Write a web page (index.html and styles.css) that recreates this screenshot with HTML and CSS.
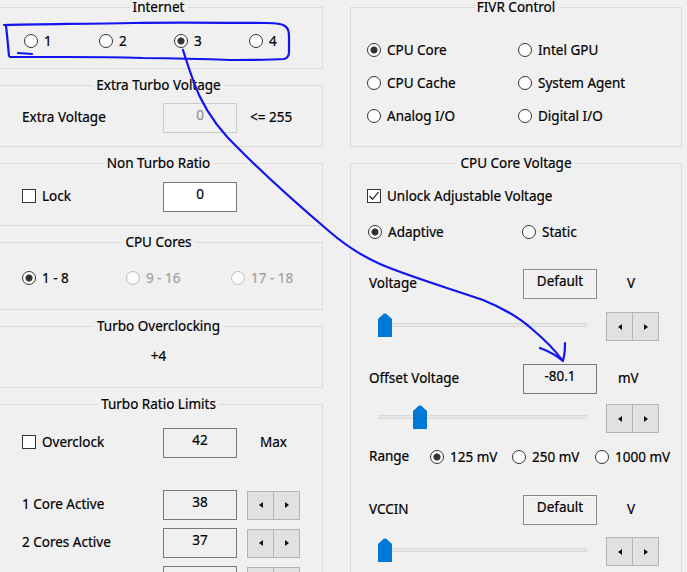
FILE: index.html
```html
<!DOCTYPE html>
<html>
<head>
<meta charset="utf-8">
<title>Settings</title>
<link rel="stylesheet" href="styles.css">
</head>
<body>
<div class="page">
  <div class="col">
    <div class="group g-internet">
      <div class="title">Internet</div>
      <div class="row r-internet">
        <span class="opt w75"><span class="radio"></span>1</span>
        <span class="opt w75"><span class="radio"></span>2</span>
        <span class="opt w75"><span class="radio on"></span>3</span>
        <span class="opt w75"><span class="radio"></span>4</span>
      </div>
    </div>

    <div class="group g-extra">
      <div class="title">Extra Turbo Voltage</div>
      <div class="row lpad r-extra">
        <span class="lbl-l">Extra Voltage</span>
        <span class="box disabled">0</span>
        <span class="after-box">&lt;= 255</span>
      </div>
    </div>

    <div class="group g-nonturbo">
      <div class="title">Non Turbo Ratio</div>
      <div class="row lpad r-nonturbo">
        <span class="opt lbl-l"><span class="check"></span>Lock</span>
        <span class="box white">0</span>
      </div>
    </div>

    <div class="group g-cores">
      <div class="title">CPU Cores</div>
      <div class="row lpad r-cores">
        <span class="opt w104"><span class="radio on"></span>1 - 8</span>
        <span class="opt w105 dis-text"><span class="radio dis"></span>9 - 16</span>
        <span class="opt dis-text"><span class="radio dis"></span>17 - 18</span>
      </div>
    </div>

    <div class="group g-oc">
      <div class="title">Turbo Overclocking</div>
      <div class="r-oc">+4</div>
    </div>

    <div class="group g-ratio">
      <div class="title">Turbo Ratio Limits</div>
      <div class="row lpad r-overclock">
        <span class="opt lbl-l"><span class="check"></span>Overclock</span>
        <span class="box">42</span>
        <span class="max">Max</span>
      </div>
      <div class="row lpad r-core1">
        <span class="lbl-l">1 Core Active</span>
        <span class="box">38</span>
        <span class="spin sp-l"><span class="sb"><span class="tri-l"></span></span><span class="sb"><span class="tri-r"></span></span></span>
      </div>
      <div class="row lpad r-core">
        <span class="lbl-l">2 Cores Active</span>
        <span class="box">37</span>
        <span class="spin sp-l"><span class="sb"><span class="tri-l"></span></span><span class="sb"><span class="tri-r"></span></span></span>
      </div>
      <div class="row lpad r-core">
        <span class="lbl-l"></span>
        <span class="box"></span>
        <span class="spin sp-l"><span class="sb"><span class="tri-l"></span></span><span class="sb"><span class="tri-r"></span></span></span>
      </div>
    </div>
  </div>

  <div class="col">
    <div class="group g-fivr">
      <div class="title">FIVR Control</div>
      <div class="rpad fivr-grid">
        <span class="opt"><span class="radio on"></span>CPU Core</span>
        <span class="opt"><span class="radio"></span>Intel GPU</span>
        <span class="opt"><span class="radio"></span>CPU Cache</span>
        <span class="opt"><span class="radio"></span>System Agent</span>
        <span class="opt"><span class="radio"></span>Analog I/O</span>
        <span class="opt"><span class="radio"></span>Digital I/O</span>
      </div>
    </div>

    <div class="group g-volt">
      <div class="title">CPU Core Voltage</div>
      <div class="row rpad r-unlock">
        <span class="opt"><span class="check on"><svg width="12" height="12" viewBox="0 0 12 12"><polyline points="1.5,6 4.5,9.2 10.5,2.2" fill="none" stroke="#333" stroke-width="1.3"/></svg></span>Unlock Adjustable Voltage</span>
      </div>
      <div class="row rpad r-mode">
        <span class="opt w154"><span class="radio on"></span>Adaptive</span>
        <span class="opt"><span class="radio"></span>Static</span>
      </div>
      <div class="row lblpad r-voltage">
        <span class="lbl-r">Voltage</span>
        <span class="box btn">Default</span>
        <span class="unit-v">V</span>
      </div>
      <div class="row rpad r-slider1">
        <span class="slider"><span class="track"></span><svg class="thumb" style="left:0px" width="14" height="24" viewBox="0 0 14 24"><polygon points="0,6 6,0.5 8,0.5 14,6 14,24 0,24" fill="#0078d7"/></svg></span>
        <span class="spin sp-r"><span class="sb"><span class="tri-l"></span></span><span class="sb"><span class="tri-r"></span></span></span>
      </div>
      <div class="row lblpad r-offset">
        <span class="lbl-r">Offset Voltage</span>
        <span class="box">-80.1</span>
        <span class="unit-mv">mV</span>
      </div>
      <div class="row rpad r-slider2">
        <span class="slider"><span class="track"></span><svg class="thumb" style="left:35px" width="14" height="24" viewBox="0 0 14 24"><polygon points="0,6 6,0.5 8,0.5 14,6 14,24 0,24" fill="#0078d7"/></svg></span>
        <span class="spin sp-r"><span class="sb"><span class="tri-l"></span></span><span class="sb"><span class="tri-r"></span></span></span>
      </div>
      <div class="row lblpad r-range">
        <span class="range-lbl">Range</span>
        <span class="opt w82"><span class="radio on"></span>125 mV</span>
        <span class="opt w83"><span class="radio"></span>250 mV</span>
        <span class="opt"><span class="radio"></span>1000 mV</span>
      </div>
      <div class="row lblpad r-vccin">
        <span class="lbl-r">VCCIN</span>
        <span class="box btn">Default</span>
        <span class="unit-v">V</span>
      </div>
      <div class="row rpad r-slider3">
        <span class="slider"><span class="track"></span><svg class="thumb" style="left:0px" width="14" height="24" viewBox="0 0 14 24"><polygon points="0,6 6,0.5 8,0.5 14,6 14,24 0,24" fill="#0078d7"/></svg></span>
        <span class="spin sp-r"><span class="sb"><span class="tri-l"></span></span><span class="sb"><span class="tri-r"></span></span></span>
      </div>
    </div>
  </div>
</div>

<svg class="annot" width="687" height="572" viewBox="0 0 687 572">
  <g fill="none" stroke="#1414ee" stroke-width="2.2" stroke-linecap="round" stroke-linejoin="round">
    <path d="M4 25 C 40 24, 90 24, 133 23 C 180 22, 230 23, 267 23 C 276 23, 282 24, 285 26 C 289 29, 289 33, 289 38 L 289 52 C 289 56, 288 58, 284 59 C 270 60, 250 60, 233 60 C 200 59, 170 58, 143 58 C 110 57, 80 57, 67 57 C 45 57, 25 57, 10 57"/>
    <path d="M6 26 C 7 34, 8 45, 9 56"/>
    <path d="M18 53 L 32 54"/>
    <path d="M183 50 C 188 66, 193 82, 200 97 C 210 118, 224 135, 240 150 C 262 172, 290 198, 330 232 C 345 245, 360 255, 380 264 C 405 275, 445 287, 483 300 C 505 309, 520 318, 532 329 C 545 340, 555 350, 562 360"/>
    <path d="M540 348 C 548 351, 556 355, 563 361"/>
    <path d="M565 343 C 565 349, 565 355, 563 360"/>
  </g>
</svg>
</body>
</html>
```
FILE: styles.css
```css
* { box-sizing: border-box; }
html, body { margin: 0; padding: 0; }
body {
  background: #f0f0f0;
  font-family: "Noto Sans", "Open Sans", sans-serif;
  font-size: 13.5px;
  color: #000;
  -webkit-text-stroke: 0.2px #000;
  width: 687px;
  height: 572px;
  overflow: hidden;
  position: relative;
}
.page {
  display: grid;
  grid-template-columns: 329px 332px;
  column-gap: 27px;
  margin-left: -6px;
  padding-top: 7px;
  align-items: start;
}
.col { display: flex; flex-direction: column; gap: 16px; }
.group { border: 1px solid #dcdcdc; }
.title {
  width: max-content;
  margin: -8px auto 0;
  padding: 0 3px;
  background: #f0f0f0;
  line-height: 15px;
  height: 15px;
  white-space: nowrap;
}
.g-internet { height: 62px; }
.g-extra { height: 62px; }
.g-nonturbo { height: 63px; }
.g-cores { height: 68px; }
.g-oc { height: 62px; }
.g-ratio { height: 170px; }
.g-fivr { height: 140px; }
.g-volt { height: 411px; }

.row { display: flex; align-items: center; white-space: nowrap; }
.lpad { padding-left: 27px; }
.rpad { padding-left: 16px; }
.lblpad { padding-left: 18px; }
.opt { display: flex; align-items: center; gap: 6px; flex: none; white-space: nowrap; }
.w75 { width: 75px; }
.w104 { width: 104px; }
.w105 { width: 105px; }
.w154 { width: 154px; }
.w82 { width: 82px; }
.w83 { width: 83px; }

.lbl-l, .lbl-r, .range-lbl, .after-box, .max, .unit-v, .unit-mv { padding-bottom: 2px; }

.radio {
  width: 14px; height: 14px; flex: none;
  border: 1px solid #333; border-radius: 50%;
  background: #fff;
}
.radio.on { background: radial-gradient(circle at center, #333 0 3.2px, #fff 3.9px); }
.radio.dis { border-color: #bdbdbd; background: #fbfbfb; }
.dis-text { color: #a0a0a0; -webkit-text-stroke: 0.2px #a0a0a0; }
.check {
  width: 14px; height: 14px; flex: none;
  border: 1px solid #333; background: #fff;
  display: flex; align-items: center; justify-content: center;
}
.box {
  width: 74px; height: 30px; flex: none;
  border: 1px solid #7a7a7a;
  display: flex; align-items: center; justify-content: center;
  padding-bottom: 6px;
}
.box.white { background: #fff; }
.box.disabled { border-color: #cccccc; color: #8e8e8e; -webkit-text-stroke: 0.2px #8e8e8e; }
.box.btn { border-color: #888; box-shadow: inset 0 0 0 1px #f8f8f8; }

.spin { display: flex; flex: none; }
.sb {
  width: 27px; height: 29px;
  background: #e1e1e1; border: 1px solid #b4b4b4;
  display: flex; align-items: center; justify-content: center;
}
.sb + .sb { margin-left: -1px; }
.tri-l { width: 0; height: 0; border-top: 3px solid transparent; border-bottom: 3px solid transparent; border-right: 4px solid #111; }
.tri-r { width: 0; height: 0; border-top: 3px solid transparent; border-bottom: 3px solid transparent; border-left: 4px solid #111; }

/* left column rows */
.r-internet { margin: 16px 0 0 2px; height: 20px; padding-left: 27px; }
.lbl-l { width: 141px; flex: none; }
.r-extra { margin-top: 10px; height: 30px; }
.after-box { margin-left: 13px; }
.r-nonturbo { margin-top: 11px; height: 30px; }
.r-cores { margin-top: 18px; height: 20px; }
.r-oc { margin-top: 12px; height: 20px; line-height: 20px; text-align: center; }
.r-overclock { margin-top: 16px; height: 30px; }
.max { margin-left: 23px; }
.r-core1 { margin-top: 32px; height: 30px; }
.r-core { margin-top: 8px; height: 30px; }
.sp-l { margin-left: 10px; }

/* right column rows */
.fivr-grid {
  display: grid;
  grid-template-columns: 151px auto;
  grid-auto-rows: 33px;
  align-items: center;
  margin-top: 18px;
}
.r-unlock { margin-top: 15px; height: 20px; }
.r-mode { margin-top: 16px; height: 20px; padding-left: 17px; }
.lbl-r { width: 154px; flex: none; }
.r-voltage { margin-top: 27px; height: 30px; }
.unit-v { margin-left: 30px; }
.unit-mv { margin-left: 21px; }
.r-slider1 { margin-top: 13px; height: 29px; }
.r-offset { margin-top: 23px; height: 30px; }
.r-slider2 { margin-top: 10px; height: 29px; }
.r-range { margin-top: 14px; height: 20px; }
.range-lbl { width: 61px; flex: none; }
.r-vccin { margin-top: 28px; height: 30px; }
.r-slider3 { margin-top: 12px; height: 29px; }

.slider { position: relative; width: 209px; height: 29px; margin-left: 11px; flex: none; }
.track {
  position: absolute; left: 0; right: 0; top: 11px; height: 4px;
  background: #e7e7e7; border: 1px solid #d9d9d9;
}
.thumb { position: absolute; top: 1px; }
.sp-r { margin-left: 19px; }

.annot { position: absolute; left: 0; top: 0; pointer-events: none; }
```
